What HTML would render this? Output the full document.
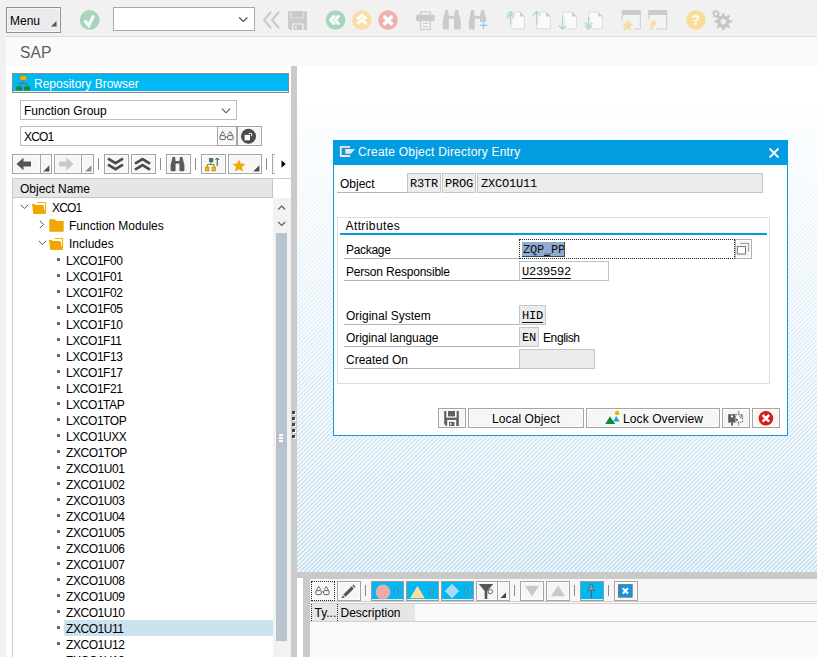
<!DOCTYPE html>
<html>
<head>
<meta charset="utf-8">
<title>SAP</title>
<style>
*{box-sizing:border-box;margin:0;padding:0}
html,body{width:817px;height:657px;overflow:hidden;background:#f1f1f1;font-family:"Liberation Sans",sans-serif;font-size:12px;color:#000}
.abs{position:absolute}
#root{position:relative;width:817px;height:657px;overflow:hidden;background:#f1f1f1}
.t{position:absolute;white-space:nowrap;line-height:1}
.mono{font-family:"Liberation Mono",monospace}
/* top toolbar */
#topbar{left:0;top:0;width:817px;height:36px;background:#f1f1f1}
#topline{left:6px;top:36px;width:811px;height:1px;background:#dcdcdc}
#titlebar{left:6px;top:37px;width:811px;height:29px;background:#fafafa}
#white{left:6px;top:66px;width:285px;height:591px;background:#fff}
.btn{position:absolute;background:#f6f6f6;border:1px solid #a4a4a4;box-shadow:inset 0 0 0 1px #fdfdfd}
.fld{position:absolute;background:#fff;border:1px solid #bdbdbd}
.ro{position:absolute;background:#ececec;border:1px solid #c6c6c6}
.sep{position:absolute;width:1px;background:#8c8c8c}
.row{position:absolute;left:66px;font-size:12px;line-height:1;white-space:nowrap}
.dot{position:absolute;left:58px;width:3px;height:3px;background:#555}
.lbl{position:absolute;font-size:12px;white-space:nowrap;line-height:1}
.ul{position:absolute;height:1px;background:#b4b4b4}
</style>
</head>
<body>
<div id="root">
<!-- TOPBAR -->
<div class="abs" id="topbar"></div>
<div class="abs" id="topline"></div>
<div class="abs" id="titlebar"></div>
<div class="abs" id="white"></div>

<!-- Menu button -->
<div class="abs" style="left:6px;top:7px;width:55px;height:26px;border:1px solid #909090;background:#ebebeb;box-shadow:inset 0 0 0 1px #f8f8f8"></div>
<div class="t" style="left:10px;top:14.7px;font-size:12px;color:#000">Menu</div>
<svg class="abs" style="left:50px;top:20px" width="8" height="8" viewBox="0 0 8 8"><path d="M6.5 1 L6.5 6.5 L1 6.5 Z" fill="#555"/></svg>
<!-- green check -->
<svg class="abs" style="left:79px;top:9px" width="22" height="22" viewBox="0 0 22 22"><circle cx="10.7" cy="10.9" r="9.9" fill="#a6d5bc"/><path d="M5.6 11.6 L9.7 16.4 L14.6 6.6" fill="none" stroke="#fdfdfd" stroke-width="3.1" stroke-linejoin="miter"/></svg>
<!-- command field -->
<div class="abs" style="left:113px;top:7px;width:142px;height:24px;background:#fff;border:1px solid #aaa"></div>
<svg class="abs" style="left:237px;top:14.7px" width="12" height="10" viewBox="0 0 12 10"><path d="M2.2 2.5 L6.3 6.5 L10.4 2.5" fill="none" stroke="#4a4a5a" stroke-width="1.15"/></svg>
<!-- << -->
<svg class="abs" style="left:262px;top:10px" width="20" height="20" viewBox="0 0 20 20"><path d="M9 2 L2 10 L9 18 M17 2 L10 10 L17 18" fill="none" stroke="#c9c9c9" stroke-width="2"/></svg>
<!-- save -->
<svg class="abs" style="left:288px;top:11px" width="20" height="20" viewBox="0 0 20 20"><path d="M0 0.2 H19 V19 H2 L0 17 Z" fill="#cbcbcb"/><rect x="2.6" y="0.2" width="13.2" height="7.2" fill="#e2e2e2"/><rect x="3.8" y="0.2" width="10.8" height="6.2" fill="#c8c8c8"/><rect x="4" y="12.4" width="11.6" height="6.6" fill="#ececec"/><rect x="5.6" y="13.6" width="8.4" height="5.4" fill="#c8c8c8"/><rect x="7" y="14.8" width="1.8" height="3.2" fill="#ececec"/></svg>
<!-- circles -->
<svg class="abs" style="left:325px;top:9px" width="22" height="22" viewBox="0 0 22 22"><circle cx="10.6" cy="11" r="9.8" fill="#a6d5bc"/><path d="M9.6 6.4 L5.6 11 L9.6 15.6 M14.2 6.4 L10.2 11 L14.2 15.6" fill="none" stroke="#fdfdfd" stroke-width="2.9"/></svg>
<svg class="abs" style="left:351px;top:9px" width="22" height="22" viewBox="0 0 22 22"><circle cx="10.8" cy="11" r="9.8" fill="#f9dfa6"/><path d="M6.2 10.2 L10.8 6.2 L15.4 10.2 M6.2 14.8 L10.8 10.8 L15.4 14.8" fill="none" stroke="#fdfdfd" stroke-width="2.9"/></svg>
<svg class="abs" style="left:377px;top:9px" width="22" height="22" viewBox="0 0 22 22"><circle cx="11" cy="11.1" r="9.8" fill="#efb0b0"/><path d="M6.6 7 L15.4 15.8 M15.4 7 L6.6 15.8" fill="none" stroke="#fdfdfd" stroke-width="3.4"/></svg>
<!-- printer -->
<svg class="abs" style="left:415px;top:10px" width="21" height="21" viewBox="0 0 21 21"><rect x="5.6" y="1.9" width="9.8" height="3.4" fill="#f4f4f4" stroke="#cbcbcb" stroke-width="1.2"/><rect x="1" y="4.8" width="18.8" height="6.4" rx="1.4" fill="#cbcbcb"/><rect x="5.6" y="10.6" width="9.8" height="8.8" fill="#f2f2f2" stroke="#cbcbcb" stroke-width="1.2"/><path d="M8 13.5 H13.2 M8 16.5 H13.2" stroke="#a6d6f0" stroke-width="1.1"/><rect x="16" y="6" width="2.7" height="1" fill="#a6d6f0"/></svg>
<!-- binoculars -->
<svg class="abs" style="left:442px;top:9px" width="20" height="22" viewBox="0 0 20 22"><path d="M3.2 1 H6 L6.8 7 V19.2 Q6.8 20.4 5.6 20.4 H2 Q0.8 20.4 0.8 19.2 V12 Z M13 1 H16 L18.8 12 V19.2 Q18.8 20.4 17.6 20.4 H13.2 Q12 20.4 12 19.2 V7 Z" fill="#cbcbcb"/><rect x="6" y="7" width="7" height="2.8" fill="#cbcbcb"/></svg>
<svg class="abs" style="left:468px;top:9px" width="22" height="22" viewBox="0 0 22 22"><path d="M3.2 1 H6 L6.8 7 V19.2 Q6.8 20.4 5.6 20.4 H2 Q0.8 20.4 0.8 19.2 V12 Z M13 1 H16 L18.2 10 V13 H12 V7 Z" fill="#cbcbcb"/><rect x="6" y="7" width="7" height="2.8" fill="#cbcbcb"/><path d="M15.5 12.6 V20 M11.8 16.4 H19.2" stroke="#8ccbee" stroke-width="1.1"/></svg>
<!-- doc icons -->
<svg class="abs" style="left:505px;top:9px" width="22" height="22" viewBox="0 0 22 22"><path d="M5.8 3.1 H15.2 L19.4 7.3 V19.8 H5.8 Z" fill="#fafafa" stroke="#dcdcdc" stroke-width="1"/><path d="M15 3 L19.6 7.6 H15 Z" fill="#cfcfcf"/><rect x="3" y="2" width="5" height="13" fill="#f0f0f0"/><path d="M5.6 15.5 V2.8 M1.8 6.4 L5.6 2.6 L9.4 6.4 M1.8 9.2 L5.6 5.4 L9.4 9.2" fill="none" stroke="#a6d8bc" stroke-width="1.1"/></svg>
<svg class="abs" style="left:531px;top:9px" width="22" height="22" viewBox="0 0 22 22"><path d="M5.8 3.1 H15.2 L19.4 7.3 V19.8 H5.8 Z" fill="#fafafa" stroke="#dcdcdc" stroke-width="1"/><path d="M15 3 L19.6 7.6 H15 Z" fill="#cfcfcf"/><rect x="3" y="2" width="5" height="13" fill="#f0f0f0"/><path d="M5.6 15.5 V2.8 M1.8 6.4 L5.6 2.6 L9.4 6.4" fill="none" stroke="#a6d8bc" stroke-width="1.1"/></svg>
<svg class="abs" style="left:557px;top:9px" width="22" height="22" viewBox="0 0 22 22"><path d="M5.8 3.1 H15.2 L19.4 7.3 V19.8 H5.8 Z" fill="#fafafa" stroke="#dcdcdc" stroke-width="1"/><path d="M15 3 L19.6 7.6 H15 Z" fill="#cfcfcf"/><rect x="3" y="8" width="5" height="13" fill="#f0f0f0"/><path d="M5.6 8 V20 M1.8 16.4 L5.6 20.2 L9.4 16.4" fill="none" stroke="#a6d8bc" stroke-width="1.1"/></svg>
<svg class="abs" style="left:583px;top:9px" width="22" height="22" viewBox="0 0 22 22"><path d="M5.8 3.1 H15.2 L19.4 7.3 V19.8 H5.8 Z" fill="#fafafa" stroke="#dcdcdc" stroke-width="1"/><path d="M15 3 L19.6 7.6 H15 Z" fill="#cfcfcf"/><rect x="3" y="8" width="5" height="13" fill="#f0f0f0"/><path d="M5.6 8 V20 M1.8 16.4 L5.6 20.2 L9.4 16.4 M1.8 13.6 L5.6 17.4 L9.4 13.6" fill="none" stroke="#a6d8bc" stroke-width="1.1"/></svg>
<!-- window icons -->
<svg class="abs" style="left:621px;top:9px" width="21" height="22" viewBox="0 0 21 22"><rect x="0.8" y="1" width="19" height="19.5" fill="#f4f4f4"/><rect x="0.8" y="1" width="19" height="5" fill="#cbcbcb"/><path d="M1.3 6 V11 M19.3 6 V20 H13" fill="none" stroke="#cbcbcb" stroke-width="1"/><rect x="0" y="11" width="12" height="11" fill="#f0f0f0"/><path d="M6.5 10.6 L8.1 14.6 L12.2 14.9 L9 17.5 L10.1 21.6 L6.5 19.3 L2.9 21.6 L4 17.5 L0.8 14.9 L4.9 14.6 Z" fill="#f9dc9c"/></svg>
<svg class="abs" style="left:647px;top:9px" width="21" height="22" viewBox="0 0 21 22"><rect x="1.2" y="1" width="19" height="19.5" fill="#f4f4f4"/><rect x="1.2" y="1" width="19" height="5" fill="#cbcbcb"/><path d="M1.7 6 V10 M19.7 6 V20 H10" fill="none" stroke="#cbcbcb" stroke-width="1"/><rect x="0" y="10" width="10" height="12" fill="#f0f0f0"/><path d="M3.5 20.5 Q2 13.5 6 13.3 V10.6 L9.8 14.4 L6 18 V15.6 Q4.5 15.6 6.3 20.5 Z" fill="#f9dc9c"/></svg>
<!-- help -->
<svg class="abs" style="left:685px;top:9px" width="22" height="22" viewBox="0 0 22 22"><circle cx="10.8" cy="11" r="9.8" fill="#f9dc9c"/><text x="10.8" y="16" font-family="Liberation Sans" font-weight="bold" font-size="14" text-anchor="middle" fill="#fff">?</text></svg>
<!-- gears -->
<svg class="abs" style="left:711px;top:9px" width="22" height="22" viewBox="0 0 22 22"><path d="M17.97 11.36 L20.77 11.12 L20.77 14.08 L17.97 13.84 L17.18 15.73 L19.34 17.55 L17.25 19.64 L15.43 17.48 L13.54 18.27 L13.78 21.07 L10.82 21.07 L11.06 18.27 L9.17 17.48 L7.35 19.64 L5.26 17.55 L7.42 15.73 L6.63 13.84 L3.83 14.08 L3.83 11.12 L6.63 11.36 L7.42 9.47 L5.26 7.65 L7.35 5.56 L9.17 7.72 L11.06 6.93 L10.82 4.13 L13.78 4.13 L13.54 6.93 L15.43 7.72 L17.25 5.56 L19.34 7.65 L17.18 9.47 Z" fill="#c6c6c6"/><circle cx="12.3" cy="12.6" r="6.2" fill="#c6c6c6"/><circle cx="12.3" cy="12.6" r="2.8" fill="#f0f0f0"/><path d="M7.55 4.25 L9.15 4.11 L9.15 5.49 L7.55 5.35 L7.13 6.36 L8.36 7.39 L7.39 8.36 L6.36 7.13 L5.35 7.55 L5.49 9.15 L4.11 9.15 L4.25 7.55 L3.24 7.13 L2.21 8.36 L1.24 7.39 L2.47 6.36 L2.05 5.35 L0.45 5.49 L0.45 4.11 L2.05 4.25 L2.47 3.24 L1.24 2.21 L2.21 1.24 L3.24 2.47 L4.25 2.05 L4.11 0.45 L5.49 0.45 L5.35 2.05 L6.36 2.47 L7.39 1.24 L8.36 2.21 L7.13 3.24 Z" fill="#c6c6c6"/><circle cx="4.8" cy="4.8" r="3" fill="#c6c6c6"/><circle cx="4.8" cy="4.8" r="1.5" fill="#f0f0f0"/></svg>
<!-- SAP title -->
<div class="t" id="sap" style="left:20px;top:44.1px;font-size:17.4px;color:#5e5e5e;transform:scaleX(0.9);transform-origin:0 0">SAP</div>

<div class="abs" style="left:12px;top:73px;width:277px;height:20px;background:#00b9f2;border:1px solid #8a8a8a;border-bottom-color:#8a8a8a"></div>
<div class="abs" style="left:13px;top:91px;width:275px;height:1px;background:#e8f6fc"></div>
<svg class="abs" style="left:15px;top:75px" width="16" height="17" viewBox="0 0 16 17"><path d="M8 5 V8.5 M4 11.5 V8.5 H12 V11.5" fill="none" stroke="#6a6a6a" stroke-width="1"/><rect x="5.3" y="1" width="6" height="4" fill="#f5b400" stroke="#c98a00" stroke-width="0.5"/><rect x="1.2" y="11.4" width="6" height="4.2" fill="#16893a"/><rect x="9" y="11.4" width="6" height="4.2" fill="#16893a"/></svg>
<div class="t" style="left:34px;top:78.4px;font-size:12px;color:#fff">Repository Browser</div>
<div class="fld" style="left:20px;top:100px;width:217px;height:20px"></div>
<div class="t" style="left:24px;top:105.3px;font-size:12px">Function Group</div>
<svg class="abs" style="left:220.3px;top:105.6px" width="12" height="10" viewBox="0 0 12 10"><path d="M1.9 2.6 L6 6.8 L10.1 2.6" fill="none" stroke="#4a4a5a" stroke-width="1.05"/></svg>
<div class="fld" style="left:20px;top:126px;width:198px;height:20px"></div>
<div class="t" style="left:24px;top:131.3px;font-size:12px;letter-spacing:-0.85px">XCO1</div>
<div class="btn" style="left:217px;top:126px;width:20px;height:20px;background:#f6f6f6"></div>
<svg class="abs" style="left:219.2px;top:131.3px" width="15" height="10" viewBox="0 0 15 10"><path d="M0.9 5.6 Q0.9 4.6 1.9 4.6 H5.3 Q6.3 4.6 6.3 5.6 V7.4 Q6.3 8.6 5.1 8.6 H2.1 Q0.9 8.6 0.9 7.4 Z M8.7 5.6 Q8.7 4.6 9.7 4.6 H13.1 Q14.1 4.6 14.1 5.6 V7.4 Q14.1 8.6 12.9 8.6 H9.9 Q8.7 8.6 8.7 7.4 Z" fill="none" stroke="#5a5a5a" stroke-width="0.95"/><path d="M6.3 6.2 Q7.5 5.4 8.7 6.2 M1.4 4.5 L3.7 0.5 L5.7 3.6 M9.3 3.6 L11.3 0.5 L13.6 4.5" fill="none" stroke="#5a5a5a" stroke-width="0.9"/></svg>
<div class="btn" style="left:237px;top:126px;width:25px;height:20px;background:#f6f6f6"></div>
<svg class="abs" style="left:240px;top:128px" width="17" height="17" viewBox="0 0 17 17"><circle cx="8.5" cy="8.3" r="7.5" fill="#4c4c4c"/><rect x="4.6" y="6.9" width="5.4" height="5.4" fill="#fff"/><path d="M8.8 5.5 H11.6 V8.2" fill="none" stroke="#fff" stroke-width="0.9"/></svg>
<div class="btn" style="left:12px;top:154px;width:29px;height:20px"></div>
<div class="btn" style="left:40px;top:154px;width:12px;height:20px"></div>
<svg class="abs" style="left:43px;top:164.5px" width="7" height="7" viewBox="0 0 7 7"><path d="M6.4 0.2 V6.4 H0.2 Z" fill="#505058"/></svg>
<svg class="abs" style="left:15.5px;top:157px" width="16" height="14" viewBox="0 0 16 14"><path d="M0.5 7 L7.5 0.8 V4.5 H15 V9.5 H7.5 V13.2 Z" fill="#555"/></svg>
<div class="btn" style="left:54px;top:154px;width:28px;height:20px"></div>
<div class="btn" style="left:81px;top:154px;width:13px;height:20px"></div>
<svg class="abs" style="left:85px;top:164.5px" width="7" height="7" viewBox="0 0 7 7"><path d="M6.4 0.2 V6.4 H0.2 Z" fill="#8a8a96"/></svg>
<svg class="abs" style="left:57.5px;top:157px" width="16" height="14" viewBox="0 0 16 14"><path d="M15.5 7 L8.5 0.8 V4.5 H1 V9.5 H8.5 V13.2 Z" fill="#c8c8c8"/></svg>
<div class="sep" style="left:98px;top:158px;height:12px"></div>
<div class="btn" style="left:104px;top:154px;width:25px;height:20px"></div>
<svg class="abs" style="left:107px;top:157px" width="18" height="14" viewBox="0 0 18 14"><path d="M1 1.6 L8.5 6.2 L16 1.6 M1 7.6 L8.5 12.2 L16 7.6" fill="none" stroke="#4a4a4a" stroke-width="2.7"/></svg>
<div class="btn" style="left:131px;top:154px;width:25px;height:20px"></div>
<svg class="abs" style="left:134px;top:157px" width="18" height="14" viewBox="0 0 18 14"><path d="M1 6.6 L8.5 2 L16 6.6 M1 12.6 L8.5 8 L16 12.6" fill="none" stroke="#4a4a4a" stroke-width="2.7"/></svg>
<div class="sep" style="left:160px;top:158px;height:12px"></div>
<div class="btn" style="left:166px;top:154px;width:25px;height:20px"></div>
<svg class="abs" style="left:170px;top:156px" width="15" height="16" viewBox="0 0 15 16"><path d="M2.6 1 H5 L5.6 5 V14.2 Q5.6 15.2 4.6 15.2 H1.6 Q0.6 15.2 0.6 14.2 V9 Z M10 1 H12.4 L14.4 9 V14.2 Q14.4 15.2 13.4 15.2 H10.4 Q9.4 15.2 9.4 14.2 V5 Z" fill="#5a5a5a"/><rect x="5" y="5" width="5" height="2.6" fill="#5a5a5a"/></svg>
<div class="sep" style="left:195px;top:158px;height:12px"></div>
<div class="btn" style="left:201px;top:154px;width:25px;height:20px"></div>
<svg class="abs" style="left:204px;top:156px" width="16" height="17" viewBox="0 0 16 17"><path d="M7 6 V8.5 M3.2 11 V8.5 H10 V11" fill="none" stroke="#8a6a20" stroke-width="0.9"/><rect x="5.2" y="2.2" width="3.8" height="3.8" fill="#16893a" stroke="#666" stroke-width="0.5"/><rect x="1.4" y="11" width="3.6" height="4" fill="#f5b400" stroke="#a87800" stroke-width="0.5"/><rect x="8" y="11" width="3.6" height="4" fill="#f5b400" stroke="#a87800" stroke-width="0.5"/><path d="M13.2 10 V2.2 M11.4 4 L13.2 2 L15 4" fill="none" stroke="#444" stroke-width="1"/></svg>
<div class="btn" style="left:228px;top:154px;width:34px;height:20px"></div>
<svg class="abs" style="left:232px;top:158.5px" width="14" height="13" viewBox="0 0 18 17"><path d="M9 0.6 L11.4 6 L17.4 6.6 L12.9 10.6 L14.2 16.4 L9 13.4 L3.8 16.4 L5.1 10.6 L0.6 6.6 L6.6 6 Z" fill="#f5a800"/></svg>
<svg class="abs" style="left:253px;top:164.5px" width="7" height="7" viewBox="0 0 7 7"><path d="M6.4 0.2 V6.4 H0.2 Z" fill="#505058"/></svg>
<div class="sep" style="left:266px;top:158px;height:12px"></div>
<div class="abs" style="left:272px;top:154px;width:3px;height:20px;border:1px solid #a8a8a8;border-right:none;background:#f6f6f6"></div>
<svg class="abs" style="left:280.5px;top:160px" width="5" height="8" viewBox="0 0 5 8"><path d="M0.5 0.3 L4.7 4 L0.5 7.7 Z" fill="#000"/></svg>
<div class="abs" style="left:12px;top:178px;width:279px;height:1px;background:#c9c9c9"></div><div class="abs" style="left:12px;top:179px;width:261px;height:19px;background:#e6e6e6;border-bottom:1px solid #c6c6c6;border-right:1px solid #c6c6c6"></div>
<div class="t" style="left:20px;top:182.5px;font-size:12px">Object Name</div>
<div class="abs" style="left:12px;top:178px;width:1px;height:479px;background:#c9c9c9"></div>
<div class="abs" style="left:273px;top:198px;width:18px;height:459px;background:#f2f2f2"></div>
<svg class="abs" style="left:277px;top:203px" width="10" height="26" viewBox="0 0 10 26"><path d="M1.2 6.5 L4.7 3 L8.2 6.5 M1.2 19 L4.7 22.5 L8.2 19" fill="none" stroke="#5a5a6a" stroke-width="1.1"/></svg>
<div class="abs" style="left:276px;top:233px;width:11px;height:408px;background:#b9c3ce"></div>
<div class="abs" style="left:279px;top:434px;width:4px;height:2px;background:#fff"></div>
<div class="abs" style="left:279px;top:437px;width:4px;height:2px;background:#fff"></div>
<div class="abs" style="left:279px;top:440px;width:4px;height:2px;background:#fff"></div>
<div class="abs" style="left:291px;top:66px;width:6px;height:591px;background:#cacaca"></div>
<div class="abs" style="left:293px;top:412px;width:3px;height:3px;background:#fff"></div><div class="abs" style="left:292px;top:411px;width:3px;height:3px;background:#444"></div>
<div class="abs" style="left:293px;top:418px;width:3px;height:3px;background:#fff"></div><div class="abs" style="left:292px;top:417px;width:3px;height:3px;background:#444"></div>
<div class="abs" style="left:293px;top:424px;width:3px;height:3px;background:#fff"></div><div class="abs" style="left:292px;top:423px;width:3px;height:3px;background:#444"></div>
<div class="abs" style="left:293px;top:430px;width:3px;height:3px;background:#fff"></div><div class="abs" style="left:292px;top:429px;width:3px;height:3px;background:#444"></div>
<div class="abs" style="left:293px;top:436px;width:3px;height:3px;background:#fff"></div><div class="abs" style="left:292px;top:435px;width:3px;height:3px;background:#444"></div>
<svg class="abs" style="left:20px;top:203.5px" width="9" height="6" viewBox="0 0 9 6"><path d="M0.7 0.8 L4.4 4.6 L8.1 0.8" fill="none" stroke="#556" stroke-width="1"/></svg>
<svg class="abs" style="left:31px;top:201px" width="16" height="14" viewBox="0 0 16 14"><path d="M6.6 1.5 H14.6 V9" fill="#fff" stroke="#f5b400" stroke-width="1"/><path d="M14.6 2 L14.4 12.6" stroke="#f5b400" stroke-width="1" fill="none"/><path d="M1 3 H3.8 L4.8 4.1 H12.5 L14.5 13 H2.3 Z" fill="#f0a800"/></svg>
<div class="t" style="left:52px;top:201.9px;font-size:12px;letter-spacing:-0.85px">XCO1</div>
<svg class="abs" style="left:39px;top:219.5px" width="6" height="9" viewBox="0 0 6 9"><path d="M0.8 0.7 L4.6 4.4 L0.8 8.1" fill="none" stroke="#556" stroke-width="1"/></svg>
<svg class="abs" style="left:48.7px;top:218.7px" width="15" height="13" viewBox="0 0 15 13"><path d="M0.3 0.3 H6 L7.2 2 H14.7 V12.7 H0.3 Z" fill="#f0a800"/></svg>
<div class="t" style="left:69px;top:219.6px;font-size:12px">Function Modules</div>
<svg class="abs" style="left:37.5px;top:240px" width="9" height="6" viewBox="0 0 9 6"><path d="M0.7 0.8 L4.4 4.6 L8.1 0.8" fill="none" stroke="#556" stroke-width="1"/></svg>
<svg class="abs" style="left:47.7px;top:236.6px" width="16" height="14" viewBox="0 0 16 14"><path d="M6.6 1.5 H14.6 V9" fill="#fff" stroke="#f5b400" stroke-width="1"/><path d="M14.6 2 L14.4 12.6" stroke="#f5b400" stroke-width="1" fill="none"/><path d="M1 3 H3.8 L4.8 4.1 H12.5 L14.5 13 H2.3 Z" fill="#f0a800"/></svg>
<div class="t" style="left:69px;top:238px;font-size:12px">Includes</div>
<div class="abs" style="left:57px;top:258px;width:3px;height:3px;background:#666"></div>
<div class="t" style="left:66px;top:255.2px;font-size:12px;letter-spacing:-0.45px">LXCO1F00</div>
<div class="abs" style="left:57px;top:274px;width:3px;height:3px;background:#666"></div>
<div class="t" style="left:66px;top:271.2px;font-size:12px;letter-spacing:-0.45px">LXCO1F01</div>
<div class="abs" style="left:57px;top:290px;width:3px;height:3px;background:#666"></div>
<div class="t" style="left:66px;top:287.2px;font-size:12px;letter-spacing:-0.45px">LXCO1F02</div>
<div class="abs" style="left:57px;top:306px;width:3px;height:3px;background:#666"></div>
<div class="t" style="left:66px;top:303.2px;font-size:12px;letter-spacing:-0.45px">LXCO1F05</div>
<div class="abs" style="left:57px;top:322px;width:3px;height:3px;background:#666"></div>
<div class="t" style="left:66px;top:319.2px;font-size:12px;letter-spacing:-0.45px">LXCO1F10</div>
<div class="abs" style="left:57px;top:338px;width:3px;height:3px;background:#666"></div>
<div class="t" style="left:66px;top:335.2px;font-size:12px;letter-spacing:-0.45px">LXCO1F11</div>
<div class="abs" style="left:57px;top:354px;width:3px;height:3px;background:#666"></div>
<div class="t" style="left:66px;top:351.2px;font-size:12px;letter-spacing:-0.45px">LXCO1F13</div>
<div class="abs" style="left:57px;top:370px;width:3px;height:3px;background:#666"></div>
<div class="t" style="left:66px;top:367.2px;font-size:12px;letter-spacing:-0.45px">LXCO1F17</div>
<div class="abs" style="left:57px;top:386px;width:3px;height:3px;background:#666"></div>
<div class="t" style="left:66px;top:383.2px;font-size:12px;letter-spacing:-0.45px">LXCO1F21</div>
<div class="abs" style="left:57px;top:402px;width:3px;height:3px;background:#666"></div>
<div class="t" style="left:66px;top:399.2px;font-size:12px;letter-spacing:-0.45px">LXCO1TAP</div>
<div class="abs" style="left:57px;top:418px;width:3px;height:3px;background:#666"></div>
<div class="t" style="left:66px;top:415.2px;font-size:12px;letter-spacing:-0.45px">LXCO1TOP</div>
<div class="abs" style="left:57px;top:434px;width:3px;height:3px;background:#666"></div>
<div class="t" style="left:66px;top:431.2px;font-size:12px;letter-spacing:-0.45px">LXCO1UXX</div>
<div class="abs" style="left:57px;top:450px;width:3px;height:3px;background:#666"></div>
<div class="t" style="left:66px;top:447.2px;font-size:12px;letter-spacing:-0.45px">ZXCO1TOP</div>
<div class="abs" style="left:57px;top:466px;width:3px;height:3px;background:#666"></div>
<div class="t" style="left:66px;top:463.2px;font-size:12px;letter-spacing:-0.45px">ZXCO1U01</div>
<div class="abs" style="left:57px;top:482px;width:3px;height:3px;background:#666"></div>
<div class="t" style="left:66px;top:479.2px;font-size:12px;letter-spacing:-0.45px">ZXCO1U02</div>
<div class="abs" style="left:57px;top:498px;width:3px;height:3px;background:#666"></div>
<div class="t" style="left:66px;top:495.2px;font-size:12px;letter-spacing:-0.45px">ZXCO1U03</div>
<div class="abs" style="left:57px;top:514px;width:3px;height:3px;background:#666"></div>
<div class="t" style="left:66px;top:511.2px;font-size:12px;letter-spacing:-0.45px">ZXCO1U04</div>
<div class="abs" style="left:57px;top:530px;width:3px;height:3px;background:#666"></div>
<div class="t" style="left:66px;top:527.2px;font-size:12px;letter-spacing:-0.45px">ZXCO1U05</div>
<div class="abs" style="left:57px;top:546px;width:3px;height:3px;background:#666"></div>
<div class="t" style="left:66px;top:543.2px;font-size:12px;letter-spacing:-0.45px">ZXCO1U06</div>
<div class="abs" style="left:57px;top:562px;width:3px;height:3px;background:#666"></div>
<div class="t" style="left:66px;top:559.2px;font-size:12px;letter-spacing:-0.45px">ZXCO1U07</div>
<div class="abs" style="left:57px;top:578px;width:3px;height:3px;background:#666"></div>
<div class="t" style="left:66px;top:575.2px;font-size:12px;letter-spacing:-0.45px">ZXCO1U08</div>
<div class="abs" style="left:57px;top:594px;width:3px;height:3px;background:#666"></div>
<div class="t" style="left:66px;top:591.2px;font-size:12px;letter-spacing:-0.45px">ZXCO1U09</div>
<div class="abs" style="left:57px;top:610px;width:3px;height:3px;background:#666"></div>
<div class="t" style="left:66px;top:607.2px;font-size:12px;letter-spacing:-0.45px">ZXCO1U10</div>
<div class="abs" style="left:64px;top:620px;width:209px;height:16px;background:#cce2ef"></div>
<div class="abs" style="left:57px;top:626px;width:3px;height:3px;background:#666"></div>
<div class="t" style="left:66px;top:623.2px;font-size:12px;letter-spacing:-0.45px">ZXCO1U11</div>
<div class="abs" style="left:57px;top:642px;width:3px;height:3px;background:#666"></div>
<div class="t" style="left:66px;top:639.2px;font-size:12px;letter-spacing:-0.45px">ZXCO1U12</div>
<div class="abs" style="left:57px;top:658px;width:3px;height:3px;background:#666"></div>
<div class="t" style="left:66px;top:655.2px;font-size:12px;letter-spacing:-0.45px">ZXCO1U13</div>
<div class="abs" style="left:297px;top:66px;width:520px;height:506px;background:#fff"></div>
<svg class="abs" style="left:297px;top:106px" width="520" height="466" viewBox="0 0 520 466"><defs><linearGradient id="fade" x1="0" y1="0" x2="0" y2="1"><stop offset="0" stop-color="#fff" stop-opacity="0.94"/><stop offset="0.5" stop-color="#fff" stop-opacity="0.48"/><stop offset="1" stop-color="#fff" stop-opacity="0"/></linearGradient></defs><rect width="520" height="466" fill="#fff"/><path d="M-468.00 466L-2.00 0M-463.68 466L2.32 0M-459.36 466L6.64 0M-455.04 466L10.96 0M-450.72 466L15.28 0M-446.40 466L19.60 0M-442.08 466L23.92 0M-437.76 466L28.24 0M-433.44 466L32.56 0M-429.12 466L36.88 0M-424.80 466L41.20 0M-420.48 466L45.52 0M-416.16 466L49.84 0M-411.84 466L54.16 0M-407.52 466L58.48 0M-403.20 466L62.80 0M-398.88 466L67.12 0M-394.56 466L71.44 0M-390.24 466L75.76 0M-385.92 466L80.08 0M-381.60 466L84.40 0M-377.28 466L88.72 0M-372.96 466L93.04 0M-368.64 466L97.36 0M-364.32 466L101.68 0M-360.00 466L106.00 0M-355.68 466L110.32 0M-351.36 466L114.64 0M-347.04 466L118.96 0M-342.72 466L123.28 0M-338.40 466L127.60 0M-334.08 466L131.92 0M-329.76 466L136.24 0M-325.44 466L140.56 0M-321.12 466L144.88 0M-316.80 466L149.20 0M-312.48 466L153.52 0M-308.16 466L157.84 0M-303.84 466L162.16 0M-299.52 466L166.48 0M-295.20 466L170.80 0M-290.88 466L175.12 0M-286.56 466L179.44 0M-282.24 466L183.76 0M-277.92 466L188.08 0M-273.60 466L192.40 0M-269.28 466L196.72 0M-264.96 466L201.04 0M-260.64 466L205.36 0M-256.32 466L209.68 0M-252.00 466L214.00 0M-247.68 466L218.32 0M-243.36 466L222.64 0M-239.04 466L226.96 0M-234.72 466L231.28 0M-230.40 466L235.60 0M-226.08 466L239.92 0M-221.76 466L244.24 0M-217.44 466L248.56 0M-213.12 466L252.88 0M-208.80 466L257.20 0M-204.48 466L261.52 0M-200.16 466L265.84 0M-195.84 466L270.16 0M-191.52 466L274.48 0M-187.20 466L278.80 0M-182.88 466L283.12 0M-178.56 466L287.44 0M-174.24 466L291.76 0M-169.92 466L296.08 0M-165.60 466L300.40 0M-161.28 466L304.72 0M-156.96 466L309.04 0M-152.64 466L313.36 0M-148.32 466L317.68 0M-144.00 466L322.00 0M-139.68 466L326.32 0M-135.36 466L330.64 0M-131.04 466L334.96 0M-126.72 466L339.28 0M-122.40 466L343.60 0M-118.08 466L347.92 0M-113.76 466L352.24 0M-109.44 466L356.56 0M-105.12 466L360.88 0M-100.80 466L365.20 0M-96.48 466L369.52 0M-92.16 466L373.84 0M-87.84 466L378.16 0M-83.52 466L382.48 0M-79.20 466L386.80 0M-74.88 466L391.12 0M-70.56 466L395.44 0M-66.24 466L399.76 0M-61.92 466L404.08 0M-57.60 466L408.40 0M-53.28 466L412.72 0M-48.96 466L417.04 0M-44.64 466L421.36 0M-40.32 466L425.68 0M-36.00 466L430.00 0M-31.68 466L434.32 0M-27.36 466L438.64 0M-23.04 466L442.96 0M-18.72 466L447.28 0M-14.40 466L451.60 0M-10.08 466L455.92 0M-5.76 466L460.24 0M-1.44 466L464.56 0M2.88 466L468.88 0M7.20 466L473.20 0M11.52 466L477.52 0M15.84 466L481.84 0M20.16 466L486.16 0M24.48 466L490.48 0M28.80 466L494.80 0M33.12 466L499.12 0M37.44 466L503.44 0M41.76 466L507.76 0M46.08 466L512.08 0M50.40 466L516.40 0M54.72 466L520.72 0M59.04 466L525.04 0M63.36 466L529.36 0M67.68 466L533.68 0M72.00 466L538.00 0M76.32 466L542.32 0M80.64 466L546.64 0M84.96 466L550.96 0M89.28 466L555.28 0M93.60 466L559.60 0M97.92 466L563.92 0M102.24 466L568.24 0M106.56 466L572.56 0M110.88 466L576.88 0M115.20 466L581.20 0M119.52 466L585.52 0M123.84 466L589.84 0M128.16 466L594.16 0M132.48 466L598.48 0M136.80 466L602.80 0M141.12 466L607.12 0M145.44 466L611.44 0M149.76 466L615.76 0M154.08 466L620.08 0M158.40 466L624.40 0M162.72 466L628.72 0M167.04 466L633.04 0M171.36 466L637.36 0M175.68 466L641.68 0M180.00 466L646.00 0M184.32 466L650.32 0M188.64 466L654.64 0M192.96 466L658.96 0M197.28 466L663.28 0M201.60 466L667.60 0M205.92 466L671.92 0M210.24 466L676.24 0M214.56 466L680.56 0M218.88 466L684.88 0M223.20 466L689.20 0M227.52 466L693.52 0M231.84 466L697.84 0M236.16 466L702.16 0M240.48 466L706.48 0M244.80 466L710.80 0M249.12 466L715.12 0M253.44 466L719.44 0M257.76 466L723.76 0M262.08 466L728.08 0M266.40 466L732.40 0M270.72 466L736.72 0M275.04 466L741.04 0M279.36 466L745.36 0M283.68 466L749.68 0M288.00 466L754.00 0M292.32 466L758.32 0M296.64 466L762.64 0M300.96 466L766.96 0M305.28 466L771.28 0M309.60 466L775.60 0M313.92 466L779.92 0M318.24 466L784.24 0M322.56 466L788.56 0M326.88 466L792.88 0M331.20 466L797.20 0M335.52 466L801.52 0M339.84 466L805.84 0M344.16 466L810.16 0M348.48 466L814.48 0M352.80 466L818.80 0M357.12 466L823.12 0M361.44 466L827.44 0M365.76 466L831.76 0M370.08 466L836.08 0M374.40 466L840.40 0M378.72 466L844.72 0M383.04 466L849.04 0M387.36 466L853.36 0M391.68 466L857.68 0M396.00 466L862.00 0M400.32 466L866.32 0M404.64 466L870.64 0M408.96 466L874.96 0M413.28 466L879.28 0M417.60 466L883.60 0M421.92 466L887.92 0M426.24 466L892.24 0M430.56 466L896.56 0M434.88 466L900.88 0M439.20 466L905.20 0M443.52 466L909.52 0M447.84 466L913.84 0M452.16 466L918.16 0M456.48 466L922.48 0M460.80 466L926.80 0M465.12 466L931.12 0M469.44 466L935.44 0M473.76 466L939.76 0M478.08 466L944.08 0M482.40 466L948.40 0M486.72 466L952.72 0M491.04 466L957.04 0M495.36 466L961.36 0M499.68 466L965.68 0M504.00 466L970.00 0M508.32 466L974.32 0M512.64 466L978.64 0M516.96 466L982.96 0M521.28 466L987.28 0" stroke="#c4dff0" stroke-width="1.8" fill="none"/><rect width="520" height="466" fill="url(#fade)"/></svg>
<div class="abs" style="left:297px;top:572px;width:520px;height:6px;background:#c9c9c9"></div>
<div class="abs" id="dlg" style="left:333px;top:140px;width:455px;height:296px;background:#fff;border:1px solid #0a9ade;border-left-width:1.4px"></div>
<div class="abs" style="left:333px;top:140px;width:455px;height:25px;background:#029de0"></div>
<svg class="abs" style="left:339px;top:145px" width="17" height="13" viewBox="0 0 17 13"><path d="M11.1 1.9 H1.8 V11 H11.1" fill="none" stroke="#f8e6de" stroke-width="1.8"/><path d="M6.2 4.1 H16.1 L11.9 8.7 H6.2 Z" fill="#e6e6e6"/></svg>
<div class="t" style="left:358px;top:145.6px;font-size:12px;color:#fff;letter-spacing:0.2px">Create Object Directory Entry</div>
<svg class="abs" style="left:768px;top:147px" width="12" height="12" viewBox="0 0 12 12"><path d="M1.5 1.5 L10.5 10.5 M10.5 1.5 L1.5 10.5" stroke="#f4f4f4" stroke-width="2" fill="none"/></svg>
<div class="lbl" style="left:340px;top:177.6px">Object</div>
<div class="ul" style="left:337px;top:192px;width:71px"></div>
<div class="ro" style="left:407px;top:173px;width:34px;height:20px"></div>
<div class="t mono" style="left:410px;top:177.5px;font-size:12px;letter-spacing:-0.2px;transform:rotate(0.03deg);transform-origin:0 0">R3TR</div>
<div class="ro" style="left:442px;top:173px;width:34px;height:20px"></div>
<div class="t mono" style="left:445px;top:177.5px;font-size:12px;letter-spacing:-0.2px;transform:rotate(0.03deg);transform-origin:0 0">PROG</div>
<div class="ro" style="left:477px;top:173px;width:286px;height:20px"></div>
<div class="t mono" style="left:480.5px;top:177.5px;font-size:12px;letter-spacing:-0.2px;transform:rotate(0.03deg);transform-origin:0 0">ZXCO1U11</div>
<div class="abs" style="left:337px;top:217px;width:433px;height:167px;border:1px solid #dedede;background:#fff"></div>
<div class="lbl" style="left:345.5px;top:219.8px;letter-spacing:0.4px">Attributes</div>
<div class="abs" style="left:340px;top:233px;width:427px;height:2px;background:#029de0"></div>
<div class="lbl" style="left:346px;top:243.6px;letter-spacing:-0.3px">Package</div>
<div class="ul" style="left:344px;top:258px;width:176px"></div>
<div class="lbl" style="left:346px;top:265.6px;letter-spacing:-0.2px">Person Responsible</div>
<div class="ul" style="left:344px;top:280px;width:176px"></div>
<div class="lbl" style="left:346px;top:309.6px">Original System</div>
<div class="ul" style="left:344px;top:324px;width:176px"></div>
<div class="lbl" style="left:346px;top:331.6px;letter-spacing:-0.1px">Original language</div>
<div class="ul" style="left:344px;top:346px;width:176px"></div>
<div class="lbl" style="left:346px;top:353.6px">Created On</div>
<div class="ul" style="left:344px;top:368px;width:176px"></div>
<div class="abs" style="left:519px;top:239px;width:216px;height:20px;background:#fff;border:1px dotted #222"></div>
<div class="abs" style="left:522px;top:241.5px;width:42.5px;height:15px;background:#8eaccf"></div>
<div class="t mono" style="left:522.6px;top:243.6px;font-size:12px;letter-spacing:-0.2px;transform:rotate(0.03deg);transform-origin:0 0;color:#111">ZQP_PP</div>
<div class="abs" style="left:564px;top:241.5px;width:1px;height:15px;background:#5a4630"></div><div class="abs" style="left:522px;top:256px;width:42px;height:1px;background:#3a4656"></div><div class="abs" style="left:543.5px;top:254.8px;width:6.8px;height:1.7px;background:#111"></div>
<div class="btn" style="left:735px;top:239px;width:17px;height:20px;background:#f6f6f6;border-color:#b0b0b0"></div>
<svg class="abs" style="left:735.5px;top:242.2px" width="15" height="15" viewBox="0 0 15 15"><path d="M4.2 1.4 H12.6 V9.6" fill="none" stroke="#8a8a8a" stroke-width="0.9"/><rect x="1.3" y="4.6" width="8.2" height="7.4" fill="#fff" stroke="#666" stroke-width="0.9"/></svg>
<div class="fld" style="left:519px;top:261px;width:90px;height:20px;border-color:#c2c2c2"></div>
<div class="t mono" style="left:522.4px;top:265.6px;font-size:12px;letter-spacing:-0.2px;transform:rotate(0.03deg);transform-origin:0 0">U239592</div>
<div class="abs" style="left:522px;top:278px;width:49px;height:1px;background:#111"></div>
<div class="ro" style="left:519px;top:305px;width:27px;height:20px"></div>
<div class="t mono" style="left:522.4px;top:309.6px;font-size:12px;letter-spacing:-0.2px;transform:rotate(0.03deg);transform-origin:0 0">HID</div>
<div class="abs" style="left:522px;top:322px;width:21px;height:1px;background:#111"></div>
<div class="ro" style="left:519px;top:327px;width:20px;height:20px"></div>
<div class="t mono" style="left:522.4px;top:331.6px;font-size:12px;letter-spacing:-0.2px;transform:rotate(0.03deg);transform-origin:0 0">EN</div>
<div class="lbl" style="left:543px;top:331.6px;letter-spacing:-0.4px">English</div>
<div class="ro" style="left:519px;top:349px;width:76px;height:20px"></div>
<div class="btn" style="left:438px;top:408px;width:28px;height:20px;border-color:#a4a4a4"></div>
<svg class="abs" style="left:444px;top:411px" width="15" height="15" viewBox="0 0 15 15"><path d="M0.2 0 H14.8 V15 H2.2 L0.2 13 Z" fill="#606060"/><rect x="2.4" y="0" width="10.2" height="6.6" fill="#fff"/><rect x="4" y="0" width="7" height="5.4" fill="#606060"/><rect x="3.2" y="9" width="9" height="6" fill="#fff"/><rect x="5" y="10.8" width="5.4" height="4.2" fill="#606060"/><rect x="6.2" y="11.8" width="1.2" height="2.4" fill="#fff"/></svg>
<div class="btn" style="left:468px;top:408px;width:116px;height:20px;border-color:#a4a4a4"></div>
<div class="lbl" style="left:492px;top:413.3px;letter-spacing:0.1px">Local Object</div>
<div class="btn" style="left:586px;top:408px;width:134px;height:20px;border-color:#a4a4a4"></div>
<svg class="abs" style="left:604px;top:409px" width="17" height="17" viewBox="0 0 17 17"><path d="M12.1 7 L15.6 12.6 H9.4 Z" fill="#1a9fe4"/><path d="M6 7.2 L11.2 15 H1.2 Z" fill="#128a38"/><circle cx="13.1" cy="4" r="2.3" fill="#f5b000"/></svg>
<div class="lbl" style="left:623px;top:413.3px;letter-spacing:0.1px">Lock Overview</div>
<div class="btn" style="left:722px;top:408px;width:28px;height:20px;border-color:#a4a4a4"></div>
<svg class="abs" style="left:727px;top:409px" width="18" height="18" viewBox="0 0 18 18"><rect x="1.2" y="5.2" width="7" height="8.4" fill="#5a5a5a"/><circle cx="5" cy="7.4" r="1.1" fill="#fff"/><rect x="4.3" y="13.6" width="1.6" height="3" fill="#444"/><rect x="8.6" y="5.6" width="7" height="7.6" fill="#fafafa" stroke="#555" stroke-width="0.9" stroke-dasharray="1.4 1.2"/><path d="M11.6 2.2 V5.4 M11.6 13.6 V16.6" stroke="#6a7a8a" stroke-width="1.4" stroke-dasharray="1.2 0.8"/><circle cx="14" cy="7.8" r="1.2" fill="none" stroke="#3a6a9a" stroke-width="0.8"/><circle cx="10" cy="10.8" r="1" fill="#444"/></svg>
<div class="btn" style="left:752px;top:408px;width:28px;height:20px;border-color:#a4a4a4"></div>
<svg class="abs" style="left:757.5px;top:410px" width="16" height="16" viewBox="0 0 16 16"><circle cx="7.9" cy="8.3" r="7.3" fill="#d51c1c"/><path d="M4.6 5 L11.2 11.6 M11.2 5 L4.6 11.6" stroke="#fff" stroke-width="2.5" fill="none"/></svg>
<div class="abs" style="left:297px;top:578px;width:6px;height:79px;background:#fff"></div>
<div class="abs" style="left:303px;top:572px;width:7px;height:85px;background:#cacaca"></div>
<div class="abs" style="left:310px;top:578px;width:507px;height:1px;background:#cacaca"></div>
<div class="abs" style="left:310px;top:579px;width:507px;height:22px;background:#f7f7f7"></div>
<div class="abs" style="left:310px;top:601px;width:507px;height:1px;background:#cdcdcd"></div>
<div class="abs" style="left:310px;top:602px;width:507px;height:1px;background:#fbfbfb"></div>
<div class="abs" style="left:310px;top:603px;width:507px;height:1px;background:#d0d0d0"></div>
<div class="abs" style="left:310px;top:604px;width:507px;height:53px;background:#fafafa"></div>
<div class="abs" style="left:310px;top:621px;width:507px;height:1px;background:#cfcfcf"></div>
<div class="abs" style="left:311px;top:604px;width:104px;height:17px;background:#e6e6e6"></div>
<div class="abs" style="left:311px;top:604px;width:0;height:17px;border-left:1px dotted #333"></div>
<div class="abs" style="left:337px;top:604px;width:0;height:17px;border-left:1px dotted #333"></div>
<div class="lbl" style="left:314.5px;top:606.8px">Ty...</div>
<div class="lbl" style="left:340.5px;top:606.8px">Description</div>
<div class="btn" style="left:311px;top:581px;width:24px;height:20px;background:#f8f8f8;border:1px dotted #222"></div>
<svg class="abs" style="left:315px;top:586px" width="15" height="10" viewBox="0 0 15 10"><path d="M0.9 5.6 Q0.9 4.6 1.9 4.6 H5.3 Q6.3 4.6 6.3 5.6 V7.4 Q6.3 8.6 5.1 8.6 H2.1 Q0.9 8.6 0.9 7.4 Z M8.7 5.6 Q8.7 4.6 9.7 4.6 H13.1 Q14.1 4.6 14.1 5.6 V7.4 Q14.1 8.6 12.9 8.6 H9.9 Q8.7 8.6 8.7 7.4 Z" fill="none" stroke="#5a5a5a" stroke-width="0.95"/><path d="M6.3 6.2 Q7.5 5.4 8.7 6.2 M1.4 4.5 L3.7 0.5 L5.7 3.6 M9.3 3.6 L11.3 0.5 L13.6 4.5" fill="none" stroke="#5a5a5a" stroke-width="0.9"/></svg>
<div class="btn" style="left:337px;top:581px;width:24px;height:20px;background:#f6f6f6;"></div>
<svg class="abs" style="left:340px;top:583px" width="18" height="17" viewBox="0 0 18 17"><path d="M3.4 11.4 L11.6 3.2 L13.9 5.5 L5.7 13.7 Z" fill="#555"/><path d="M12.3 2.5 L13.3 1.5 L15.6 3.8 L14.6 4.8 Z" fill="#555"/><path d="M2.8 12.2 L4.9 14.3 L1.4 15.4 Z" fill="#555"/></svg>
<div class="sep" style="left:365px;top:585px;height:11px"></div>
<div class="abs" style="left:371px;top:581px;width:33px;height:20px;background:#00b9f2;border:1px solid #9a9a9a"></div>
<div class="abs" style="left:372px;top:599px;width:31px;height:1px;background:#dff3fc"></div>
<svg class="abs" style="left:374.5px;top:583.8px" width="16" height="16" viewBox="0 0 16 16"><circle cx="8" cy="8" r="7.4" fill="#eeaaaa"/></svg>
<div class="lbl" style="left:393.5px;top:585.6px;color:#5590b8">0</div>
<div class="abs" style="left:406px;top:581px;width:33px;height:20px;background:#00b9f2;border:1px solid #9a9a9a"></div>
<div class="abs" style="left:407px;top:599px;width:31px;height:1px;background:#dff3fc"></div>
<svg class="abs" style="left:409px;top:583.6px" width="16" height="16" viewBox="0 0 16 16"><path d="M8.4 1.8 L15.8 14.3 H1 Z" fill="#f7dd9e"/></svg>
<div class="lbl" style="left:428.5px;top:585.6px;color:#5590b8">0</div>
<div class="abs" style="left:441px;top:581px;width:33px;height:20px;background:#00b9f2;border:1px solid #9a9a9a"></div>
<div class="abs" style="left:442px;top:599px;width:31px;height:1px;background:#dff3fc"></div>
<svg class="abs" style="left:444px;top:583.4px" width="16" height="16" viewBox="0 0 16 16"><path d="M8 0.8 L15.2 8 L8 15.2 L0.8 8 Z" fill="#a8daf4"/></svg>
<div class="lbl" style="left:463.5px;top:585.6px;color:#5590b8">0</div>
<div class="btn" style="left:476px;top:581px;width:22px;height:20px;background:#f6f6f6;"></div>
<div class="btn" style="left:497px;top:581px;width:13px;height:20px;background:#f6f6f6;"></div>
<svg class="abs" style="left:478px;top:583px" width="18" height="17" viewBox="0 0 18 17"><path d="M0.8 1 H15.2 L9.3 8 V16 H6.7 V8 Z" fill="#555"/><circle cx="12.3" cy="8.6" r="2.2" fill="none" stroke="#555" stroke-width="0.9"/></svg>
<svg class="abs" style="left:500.3px;top:592.2px" width="7" height="7" viewBox="0 0 7 7"><path d="M6 0.5 V6 H0.5 Z" fill="#444"/></svg>
<div class="sep" style="left:514px;top:585px;height:11px"></div>
<div class="btn" style="left:520px;top:581px;width:24px;height:20px;background:#f6f6f6;"></div>
<svg class="abs" style="left:524px;top:585px" width="16" height="12" viewBox="0 0 16 12"><path d="M1 0.8 H15 L8 11.5 Z" fill="#c9c9c9"/></svg>
<div class="btn" style="left:546px;top:581px;width:24px;height:20px;background:#f6f6f6;"></div>
<svg class="abs" style="left:550px;top:585px" width="16" height="12" viewBox="0 0 16 12"><path d="M1 11.2 H15 L8 0.5 Z" fill="#c9c9c9"/></svg>
<div class="sep" style="left:574px;top:585px;height:11px"></div>
<div class="abs" style="left:580px;top:581px;width:24px;height:20px;background:#00b9f2;border:1px solid #9a9a9a"></div>
<div class="abs" style="left:581px;top:599px;width:22px;height:1px;background:#dff3fc"></div>
<svg class="abs" style="left:586px;top:582px" width="12" height="18" viewBox="0 0 12 18"><path d="M3.2 2.2 H7.4 M4.2 2.4 L3.6 6.6 L1.6 8.4 H9 L7 6.6 L6.4 2.4" fill="#5ab0d0" stroke="#6a6468" stroke-width="1"/><path d="M5.3 8.6 V16.2" stroke="#5a5a5a" stroke-width="1.1"/></svg>
<div class="sep" style="left:608px;top:585px;height:11px"></div>
<div class="btn" style="left:614px;top:581px;width:24px;height:20px;background:#f6f6f6;"></div>
<svg class="abs" style="left:618px;top:584px" width="15" height="14" viewBox="0 0 15 14"><rect x="0.2" y="0.2" width="14.4" height="13.4" fill="#666"/><rect x="0.2" y="0.8" width="1" height="12.2" fill="#8a5ab0"/><rect x="1.2" y="0.9" width="13" height="12" fill="#1496dc"/><path d="M4.8 4.3 L10 9.5 M10 4.3 L4.8 9.5" stroke="#fff" stroke-width="2"/></svg>
</div>
</body>
</html>
